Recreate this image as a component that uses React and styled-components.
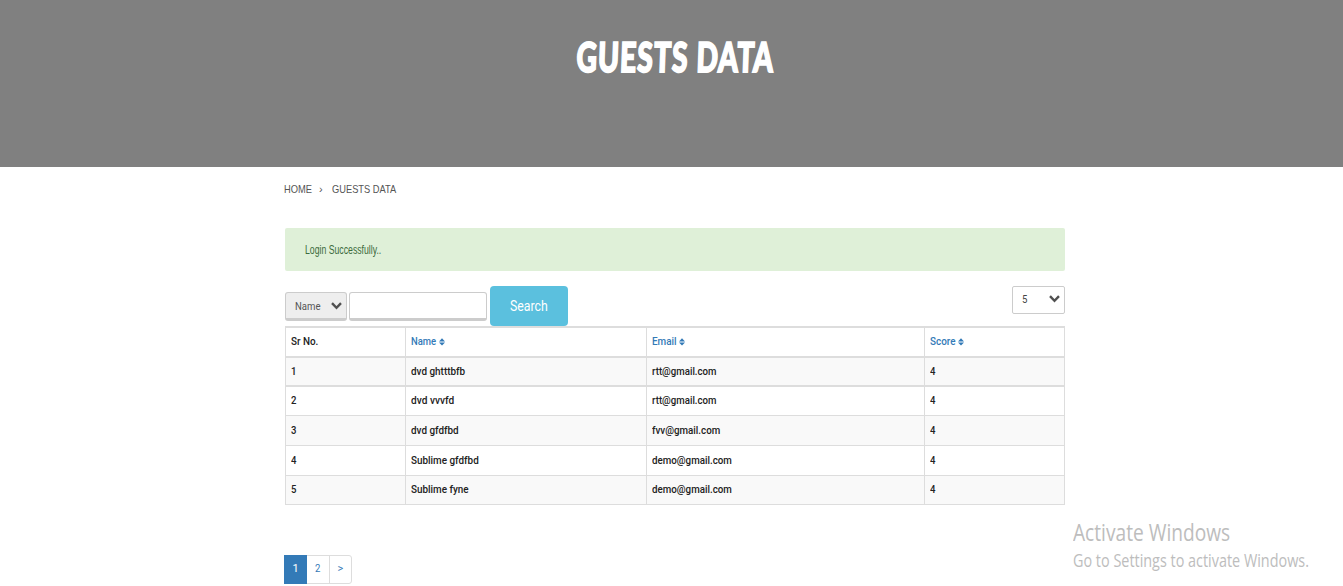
import React from 'react';
import styled, { createGlobalStyle } from 'styled-components';

const GlobalStyle = createGlobalStyle`
  *, *::before, *::after { box-sizing: border-box; }
  html, body { margin: 0; padding: 0; background: #fff; overflow: hidden; }
  body { font-family: Roboto, "Liberation Sans", sans-serif; color: #222; }
`;

const Page = styled.div`
  position: relative;
  height: 586px;
  overflow: hidden;
`;

const Hero = styled.header`
  height: 167px;
  background: #808080;
  display: flex;
  justify-content: center;
  padding: 32px 0 0 7px;
`;

const Title = styled.h1`
  margin: 0;
  height: 50px;
  font: 900 41px/50px Lato, sans-serif;
  letter-spacing: 1.5px;
  color: #fff;
  white-space: nowrap;
  -webkit-text-stroke: 1.8px #fff;
  paint-order: stroke fill;
  stroke-linejoin: round;
  transform: scaleX(0.69) skewX(-3deg);
`;

const Content = styled.main`
  width: 780px;
  margin-left: 285px;
  display: flex;
  flex-direction: column;
`;

const Condensed = styled.span`
  display: inline-block;
  white-space: nowrap;
  transform: scaleX(${(p) => p.$x || 0.87});
  transform-origin: left center;
`;

const Breadcrumb = styled.nav`
  height: 44px;
  margin: 0 0 17px -1px;
  display: flex;
  align-items: center;
  font: 11px/14px "Liberation Sans", Arial, sans-serif;
  color: #555;
`;

const Crumb = styled.div`
  width: ${(p) => p.$w}px;
`;

const Alert = styled.div`
  height: 43px;
  margin-bottom: 15px;
  padding-left: 20px;
  display: flex;
  align-items: center;
  border-radius: 2px;
  background: #dff0d8;
  color: #3c6b3d;
  font: 12px/16px "Liberation Sans", Arial, sans-serif;
`;

const Toolbar = styled.div`
  height: 40px;
  display: flex;
  align-items: flex-start;
`;

const Field = styled.div`
  width: ${(p) => p.$w}px;
  height: 29px;
  margin: 6px ${(p) => p.$gap}px 0 0;
  padding: 0 4px 0 9px;
  display: flex;
  align-items: center;
  justify-content: space-between;
  border: 1px solid #ccc;
  border-bottom-width: 3px;
  border-radius: 3px;
  background: ${(p) => p.$bg || '#fff'};
  color: #555;
  font-size: 11px;
`;

const FieldText = styled.span`
  padding-top: 2px;
`;

const SearchButton = styled.button`
  width: 78px;
  height: 40px;
  padding: 0 0 0 20px;
  border: 0;
  border-radius: 4px;
  background: #5bc0de;
  color: #fff;
  font: 400 14px/40px Roboto, sans-serif;
  text-align: left;
`;

const PageSize = styled.div`
  width: 53px;
  height: 28px;
  margin-left: auto;
  padding: 0 4px 2px 9px;
  display: flex;
  align-items: center;
  justify-content: space-between;
  border: 1px solid #ccc;
  border-radius: 2px;
  color: #444;
  font-size: 11px;
`;

const Table = styled.div`
  border: solid #ddd;
  border-width: 2px 1px 0;
`;

const Row = styled.div`
  height: ${(p) => p.$h}px;
  display: grid;
  grid-template-columns: 120px 241px 278px 1fr;
  border-bottom: ${(p) => p.$line}px solid #ddd;
  background: ${(p) => (p.$striped ? '#f9f9f9' : '#fff')};
`;

const Cell = styled.div`
  display: flex;
  align-items: center;
  padding: 0 0 1px 5px;
  font-size: 11px;
  font-weight: 500;
  color: #222;
  &:not(:last-child) { border-right: 1px solid #ddd; }
`;

const SortLabel = styled.span`
  width: ${(p) => p.$w}px;
  color: #337ab7;
`;

const Pager = styled.nav`
  height: 29px;
  width: 68px;
  margin: 50px 0 0 -1px;
  display: flex;
  border: 1px solid #ddd;
  border-radius: 3px;
`;

const PageLink = styled.a`
  width: ${(p) => (p.$active ? 23 : 22)}px;
  height: 29px;
  margin: ${(p) => (p.$active ? '-1px 0 0 -1px' : '-1px 0 0')};
  display: flex;
  align-items: center;
  justify-content: center;
  padding-bottom: 2px;
  background: ${(p) => (p.$active ? '#337ab7' : 'transparent')};
  color: ${(p) => (p.$active ? '#fff' : '#337ab7')};
  font-size: 11px;
  & + & + & { border-left: 1px solid #ddd; }
`;

const Watermark = styled.aside`
  position: absolute;
  left: 1073px;
  top: 516px;
  color: #bdbdbd;
  font-family: "Open Sans", sans-serif;
  font-weight: 400;
`;

const WatermarkLine = styled.div`
  height: ${(p) => p.$h}px;
  font-size: ${(p) => p.$size}px;
  line-height: ${(p) => p.$h}px;
`;

const Chevron = () => (
  <svg width="11" height="8" viewBox="0 0 11 8" fill="none" stroke="#505050" strokeWidth="2.4">
    <path d="M1 1.2 5.5 5.8 10 1.2" />
  </svg>
);

const SortIcon = () => (
  <svg width="6" height="8" viewBox="0 0 6 8" fill="#337ab7">
    <path d="M0 3.4 3 0.2 6 3.4ZM0 4.4 3 7.6 6 4.4Z" />
  </svg>
);

const guests = [
  { no: '1', name: 'dvd ghtttbfb', nx: 0.9, email: 'rtt@gmail.com', ex: 0.88, h: 29, line: 2 },
  { no: '2', name: 'dvd vvvfd', nx: 0.92, email: 'rtt@gmail.com', ex: 0.88, h: 29, line: 1 },
  { no: '3', name: 'dvd gfdfbd', nx: 0.9, email: 'fvv@gmail.com', ex: 0.89, h: 30, line: 1 },
  { no: '4', name: 'Sublime gfdfbd', nx: 0.9, email: 'demo@gmail.com', ex: 0.89, h: 30, line: 1 },
  { no: '5', name: 'Sublime fyne', nx: 0.9, email: 'demo@gmail.com', ex: 0.89, h: 29, line: 1 },
];

export default function App() {
  return (
    <Page>
      <GlobalStyle />
      <Hero><Title>GUESTS DATA</Title></Hero>
      <Content>
        <Breadcrumb>
          <Crumb $w={35}><Condensed $x={0.85}>HOME</Condensed></Crumb>
          <Crumb $w={13}>›</Crumb>
          <Crumb><Condensed $x={0.845}>GUESTS DATA</Condensed></Crumb>
        </Breadcrumb>
        <Alert><Condensed $x={0.725}>Login Successfully..</Condensed></Alert>
        <Toolbar>
          <Field $w={62} $gap={2} $bg="#eee"><FieldText><Condensed>Name</Condensed></FieldText><Chevron /></Field>
          <Field $w={138} $gap={3} />
          <SearchButton><Condensed $x={0.88}>Search</Condensed></SearchButton>
          <PageSize><Condensed>5</Condensed><Chevron /></PageSize>
        </Toolbar>
        <Table>
          <Row $h={30} $line={2}>
            <Cell><Condensed $x={0.9}>Sr No.</Condensed></Cell>
            <Cell><SortLabel $w={28}><Condensed $x={0.86}>Name</Condensed></SortLabel><SortIcon /></Cell>
            <Cell><SortLabel $w={27}><Condensed $x={0.9}>Email</Condensed></SortLabel><SortIcon /></Cell>
            <Cell><SortLabel $w={28}><Condensed $x={0.9}>Score</Condensed></SortLabel><SortIcon /></Cell>
          </Row>
          {guests.map((g, i) => (
            <Row key={g.no} $h={g.h} $line={g.line} $striped={i % 2 === 0}>
              <Cell><Condensed>{g.no}</Condensed></Cell>
              <Cell><Condensed $x={g.nx}>{g.name}</Condensed></Cell>
              <Cell><Condensed $x={g.ex}>{g.email}</Condensed></Cell>
              <Cell><Condensed>4</Condensed></Cell>
            </Row>
          ))}
        </Table>
        <Pager>
          <PageLink $active>1</PageLink>
          <PageLink><Condensed>2</Condensed></PageLink>
          <PageLink>&gt;</PageLink>
        </Pager>
      </Content>
      <Watermark>
        <WatermarkLine $h={32} $size={23}><Condensed $x={0.833}>Activate Windows</Condensed></WatermarkLine>
        <WatermarkLine $h={25} $size={18}><Condensed $x={0.8}>Go to Settings to activate Windows.</Condensed></WatermarkLine>
      </Watermark>
    </Page>
  );
}
